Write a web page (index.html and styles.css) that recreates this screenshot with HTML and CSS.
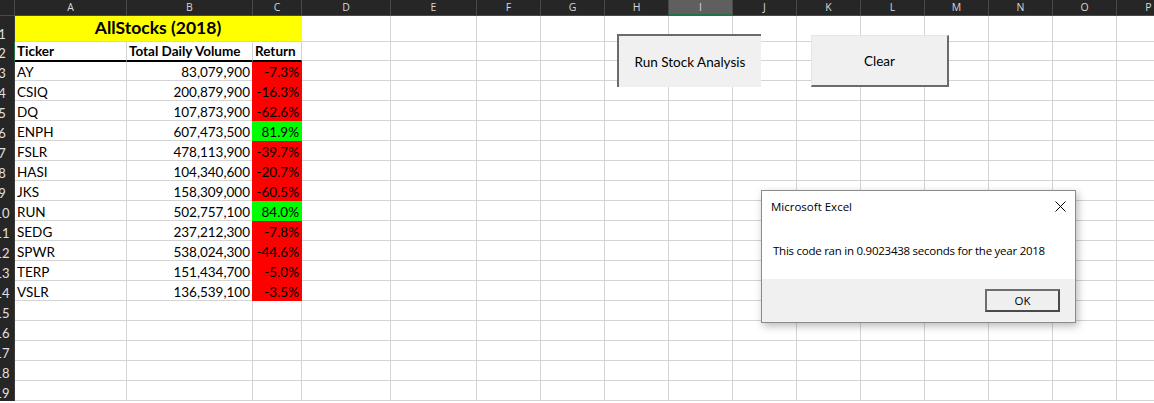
FILE: index.html
```html
<!DOCTYPE html>
<html>
<head>
<meta charset="utf-8">
<link rel="stylesheet" href="styles.css">
</head>
<body>
<div class="sheet">
  <div class="row hdr">
    <div class="corner"></div>
    <div class="ch">A</div><div class="ch">B</div><div class="ch">C</div><div class="ch">D</div><div class="ch">E</div><div class="ch">F</div><div class="ch">G</div><div class="ch">H</div><div class="ch sel">I</div><div class="ch">J</div><div class="ch">K</div><div class="ch">L</div><div class="ch">M</div><div class="ch">N</div><div class="ch">O</div><div class="ch">P</div>
  </div>
  <div class="row r1">
    <div class="rh"><span>1</span></div>
    <div class="c title">AllStocks (2018)</div>
    <div class="c"></div><div class="c"></div><div class="c"></div><div class="c"></div><div class="c"></div><div class="c"></div><div class="c"></div><div class="c"></div><div class="c"></div><div class="c"></div><div class="c"></div><div class="c"></div><div class="c"></div>
  </div>
  <div class="row r2">
    <div class="rh rh-sel"><span>2</span></div>
    <div class="c hd rule">Ticker</div><div class="c hd rule">Total Daily Volume</div><div class="c hd rule">Return</div>
    <div class="c"></div><div class="c"></div><div class="c"></div><div class="c"></div><div class="c"></div><div class="c"></div><div class="c"></div><div class="c"></div><div class="c"></div><div class="c"></div><div class="c"></div><div class="c"></div><div class="c"></div>
  </div>
  <div class="row">
    <div class="rh"><span>3</span></div>
    <div class="c top">AY</div><div class="c num top">83,079,900</div><div class="c num top neg">-7.3%</div>
    <div class="c"></div><div class="c"></div><div class="c"></div><div class="c"></div><div class="c"></div><div class="c"></div><div class="c"></div><div class="c"></div><div class="c"></div><div class="c"></div><div class="c"></div><div class="c"></div><div class="c"></div>
  </div>
  <div class="row">
    <div class="rh"><span>4</span></div>
    <div class="c">CSIQ</div><div class="c num">200,879,900</div><div class="c num neg">-16.3%</div>
    <div class="c"></div><div class="c"></div><div class="c"></div><div class="c"></div><div class="c"></div><div class="c"></div><div class="c"></div><div class="c"></div><div class="c"></div><div class="c"></div><div class="c"></div><div class="c"></div><div class="c"></div>
  </div>
  <div class="row">
    <div class="rh"><span>5</span></div>
    <div class="c">DQ</div><div class="c num">107,873,900</div><div class="c num neg">-62.6%</div>
    <div class="c"></div><div class="c"></div><div class="c"></div><div class="c"></div><div class="c"></div><div class="c"></div><div class="c"></div><div class="c"></div><div class="c"></div><div class="c"></div><div class="c"></div><div class="c"></div><div class="c"></div>
  </div>
  <div class="row">
    <div class="rh"><span>6</span></div>
    <div class="c">ENPH</div><div class="c num">607,473,500</div><div class="c num pos">81.9%</div>
    <div class="c"></div><div class="c"></div><div class="c"></div><div class="c"></div><div class="c"></div><div class="c"></div><div class="c"></div><div class="c"></div><div class="c"></div><div class="c"></div><div class="c"></div><div class="c"></div><div class="c"></div>
  </div>
  <div class="row">
    <div class="rh"><span>7</span></div>
    <div class="c">FSLR</div><div class="c num">478,113,900</div><div class="c num neg">-39.7%</div>
    <div class="c"></div><div class="c"></div><div class="c"></div><div class="c"></div><div class="c"></div><div class="c"></div><div class="c"></div><div class="c"></div><div class="c"></div><div class="c"></div><div class="c"></div><div class="c"></div><div class="c"></div>
  </div>
  <div class="row">
    <div class="rh"><span>8</span></div>
    <div class="c">HASI</div><div class="c num">104,340,600</div><div class="c num neg">-20.7%</div>
    <div class="c"></div><div class="c"></div><div class="c"></div><div class="c"></div><div class="c"></div><div class="c"></div><div class="c"></div><div class="c"></div><div class="c"></div><div class="c"></div><div class="c"></div><div class="c"></div><div class="c"></div>
  </div>
  <div class="row">
    <div class="rh"><span>9</span></div>
    <div class="c">JKS</div><div class="c num">158,309,000</div><div class="c num neg">-60.5%</div>
    <div class="c"></div><div class="c"></div><div class="c"></div><div class="c"></div><div class="c"></div><div class="c"></div><div class="c"></div><div class="c"></div><div class="c"></div><div class="c"></div><div class="c"></div><div class="c"></div><div class="c"></div>
  </div>
  <div class="row">
    <div class="rh"><span>10</span></div>
    <div class="c">RUN</div><div class="c num">502,757,100</div><div class="c num pos">84.0%</div>
    <div class="c"></div><div class="c"></div><div class="c"></div><div class="c"></div><div class="c"></div><div class="c"></div><div class="c"></div><div class="c"></div><div class="c"></div><div class="c"></div><div class="c"></div><div class="c"></div><div class="c"></div>
  </div>
  <div class="row">
    <div class="rh"><span>11</span></div>
    <div class="c">SEDG</div><div class="c num">237,212,300</div><div class="c num neg">-7.8%</div>
    <div class="c"></div><div class="c"></div><div class="c"></div><div class="c"></div><div class="c"></div><div class="c"></div><div class="c"></div><div class="c"></div><div class="c"></div><div class="c"></div><div class="c"></div><div class="c"></div><div class="c"></div>
  </div>
  <div class="row">
    <div class="rh"><span>12</span></div>
    <div class="c">SPWR</div><div class="c num">538,024,300</div><div class="c num neg">-44.6%</div>
    <div class="c"></div><div class="c"></div><div class="c"></div><div class="c"></div><div class="c"></div><div class="c"></div><div class="c"></div><div class="c"></div><div class="c"></div><div class="c"></div><div class="c"></div><div class="c"></div><div class="c"></div>
  </div>
  <div class="row">
    <div class="rh"><span>13</span></div>
    <div class="c">TERP</div><div class="c num">151,434,700</div><div class="c num neg">-5.0%</div>
    <div class="c"></div><div class="c"></div><div class="c"></div><div class="c"></div><div class="c"></div><div class="c"></div><div class="c"></div><div class="c"></div><div class="c"></div><div class="c"></div><div class="c"></div><div class="c"></div><div class="c"></div>
  </div>
  <div class="row">
    <div class="rh"><span>14</span></div>
    <div class="c">VSLR</div><div class="c num">136,539,100</div><div class="c num neg">-3.5%</div>
    <div class="c"></div><div class="c"></div><div class="c"></div><div class="c"></div><div class="c"></div><div class="c"></div><div class="c"></div><div class="c"></div><div class="c"></div><div class="c"></div><div class="c"></div><div class="c"></div><div class="c"></div>
  </div>
  <div class="row">
    <div class="rh"><span>15</span></div>
    <div class="c"></div><div class="c"></div><div class="c"></div><div class="c"></div><div class="c"></div><div class="c"></div><div class="c"></div><div class="c"></div><div class="c"></div><div class="c"></div><div class="c"></div><div class="c"></div><div class="c"></div><div class="c"></div><div class="c"></div><div class="c"></div>
  </div>
  <div class="row">
    <div class="rh"><span>16</span></div>
    <div class="c"></div><div class="c"></div><div class="c"></div><div class="c"></div><div class="c"></div><div class="c"></div><div class="c"></div><div class="c"></div><div class="c"></div><div class="c"></div><div class="c"></div><div class="c"></div><div class="c"></div><div class="c"></div><div class="c"></div><div class="c"></div>
  </div>
  <div class="row">
    <div class="rh"><span>17</span></div>
    <div class="c"></div><div class="c"></div><div class="c"></div><div class="c"></div><div class="c"></div><div class="c"></div><div class="c"></div><div class="c"></div><div class="c"></div><div class="c"></div><div class="c"></div><div class="c"></div><div class="c"></div><div class="c"></div><div class="c"></div><div class="c"></div>
  </div>
  <div class="row">
    <div class="rh"><span>18</span></div>
    <div class="c"></div><div class="c"></div><div class="c"></div><div class="c"></div><div class="c"></div><div class="c"></div><div class="c"></div><div class="c"></div><div class="c"></div><div class="c"></div><div class="c"></div><div class="c"></div><div class="c"></div><div class="c"></div><div class="c"></div><div class="c"></div>
  </div>
  <div class="row">
    <div class="rh"><span>19</span></div>
    <div class="c"></div><div class="c"></div><div class="c"></div><div class="c"></div><div class="c"></div><div class="c"></div><div class="c"></div><div class="c"></div><div class="c"></div><div class="c"></div><div class="c"></div><div class="c"></div><div class="c"></div><div class="c"></div><div class="c"></div><div class="c"></div>
  </div>

  <div class="btn btn-run">Run Stock Analysis</div>
  <div class="btn btn-clear">Clear</div>

  <div class="dialog">
    <div class="dlg-head">
      <span>Microsoft Excel</span>
      <svg class="dlg-x" width="11" height="11" viewBox="0 0 11 11"><path d="M0.5 0.5L10.5 10.5M10.5 0.5L0.5 10.5" stroke="#000" stroke-width="1" fill="none"/></svg>
    </div>
    <div class="dlg-body">This code ran in 0.9023438 seconds for the year 2018</div>
    <div class="dlg-foot"><div class="ok">OK</div></div>
  </div>
</div>
</body>
</html>
```
FILE: styles.css
```css
* { box-sizing: border-box; }
html, body { margin: 0; padding: 0; }
body {
  width: 1154px;
  height: 403px;
  overflow: hidden;
  background: #fff;
  font-family: Lato, "Liberation Sans", sans-serif;
  font-size: 13.5px;
  color: #000;
}
.sheet {
  position: relative;
  width: 1154px;
  height: 403px;
  overflow: hidden;
}
.row {
  display: grid;
  grid-template-columns: 15px 112px 126px 49px 89px 86px repeat(11, 64px);
  height: 20px;
}
.hdr { height: 16px; background: #262626; }
.r1 { height: 26px; }
.r2 { height: 19px; }

.corner {
  border-right: 1px solid #4a4a4a;
  border-bottom: 1px solid #4a4a4a;
}
.ch {
  color: #d8d8d8;
  font-family: "Open Sans", sans-serif;
  font-size: 10.5px;
  line-height: 15px;
  text-align: center;
  border-right: 1px solid #4a4a4a;
  border-bottom: 1px solid #4a4a4a;
}
.ch.sel {
  background: #5f5f5f;
  border-bottom: 2px solid #217346;
  line-height: 14px;
}

.rh {
  background: #262626;
  border-right: 1px solid #3a3a3a;
  overflow: hidden;
  display: flex;
  align-items: flex-end;
  color: #e0e0e0;
  font-size: 13px;
  line-height: 16px;
}
.rh span {
  flex: none;
  width: 24px;
  margin-left: -10px;
  text-align: center;
}
.rh-sel { border-right-color: #217346; }

.c {
  border-right: 1px solid #d4d4d4;
  border-bottom: 1px solid #d4d4d4;
  display: flex;
  align-items: flex-end;
  line-height: 16px;
  padding: 0 2px;
  white-space: nowrap;
}
.num { justify-content: flex-end; }
.hd { font-weight: 700; padding-bottom: 1px; }
.rule { border-bottom-color: #000; }
.top { border-top: 1px solid #000; }

.title {
  grid-column: span 3;
  justify-content: center;
  background: #ffff00;
  border-right-color: #ffff00;
  font-size: 17.5px;
  font-weight: 700;
  line-height: 20px;
  padding-bottom: 3px;
}
.neg {
  background: #ff0000;
  border-right-color: #ff0000;
  border-bottom-color: #ff0000;
  box-shadow: -1px 0 0 #ff0000;
}
.pos {
  background: #00ff00;
  border-right-color: #00ff00;
  border-bottom-color: #00ff00;
  box-shadow: -1px 0 0 #00ff00;
}

.btn {
  position: absolute;
  display: flex;
  align-items: center;
  justify-content: center;
  background: #f0f0f0;
  font-size: 13.5px;
  color: #000;
}
.btn-run {
  left: 617px;
  top: 34px;
  width: 144px;
  height: 53px;
  border-left: 2px solid #6b6b6b;
  border-top: 2px solid #6b6b6b;
}
.btn-clear {
  left: 811px;
  top: 35px;
  width: 138px;
  height: 52px;
  border-right: 2px solid #6b6b6b;
  border-bottom: 2px solid #6b6b6b;
  border-left: 1px solid #e6e6e6;
  border-top: 1px solid #e6e6e6;
}

.dialog {
  position: absolute;
  left: 761px;
  top: 190px;
  width: 315px;
  border: 1px solid #8a8a8a;
  background: #fff;
  box-shadow: 2px 3px 8px rgba(0, 0, 0, 0.28);
  display: flex;
  flex-direction: column;
  font-family: "Open Sans", "Noto Sans", sans-serif;
  font-size: 11.5px;
  color: #000;
}
.dlg-head {
  height: 30px;
  display: flex;
  align-items: center;
  justify-content: space-between;
  padding: 0 9px 0 9px;
}
.dlg-x { display: block; }
.dlg-body {
  height: 58px;
  display: flex;
  align-items: center;
  padding-left: 11px;
  letter-spacing: -0.25px;
}
.dlg-foot {
  height: 43px;
  background: #f0f0f0;
  display: flex;
  justify-content: flex-end;
  align-items: flex-start;
  padding: 10px 15px 0 0;
}
.ok {
  width: 75px;
  height: 23px;
  border: 2px solid #6e6e6e;
  border-right-color: #4a4a4a;
  border-bottom-color: #4a4a4a;
  background: #efefef;
  display: flex;
  align-items: center;
  justify-content: center;
}
```
